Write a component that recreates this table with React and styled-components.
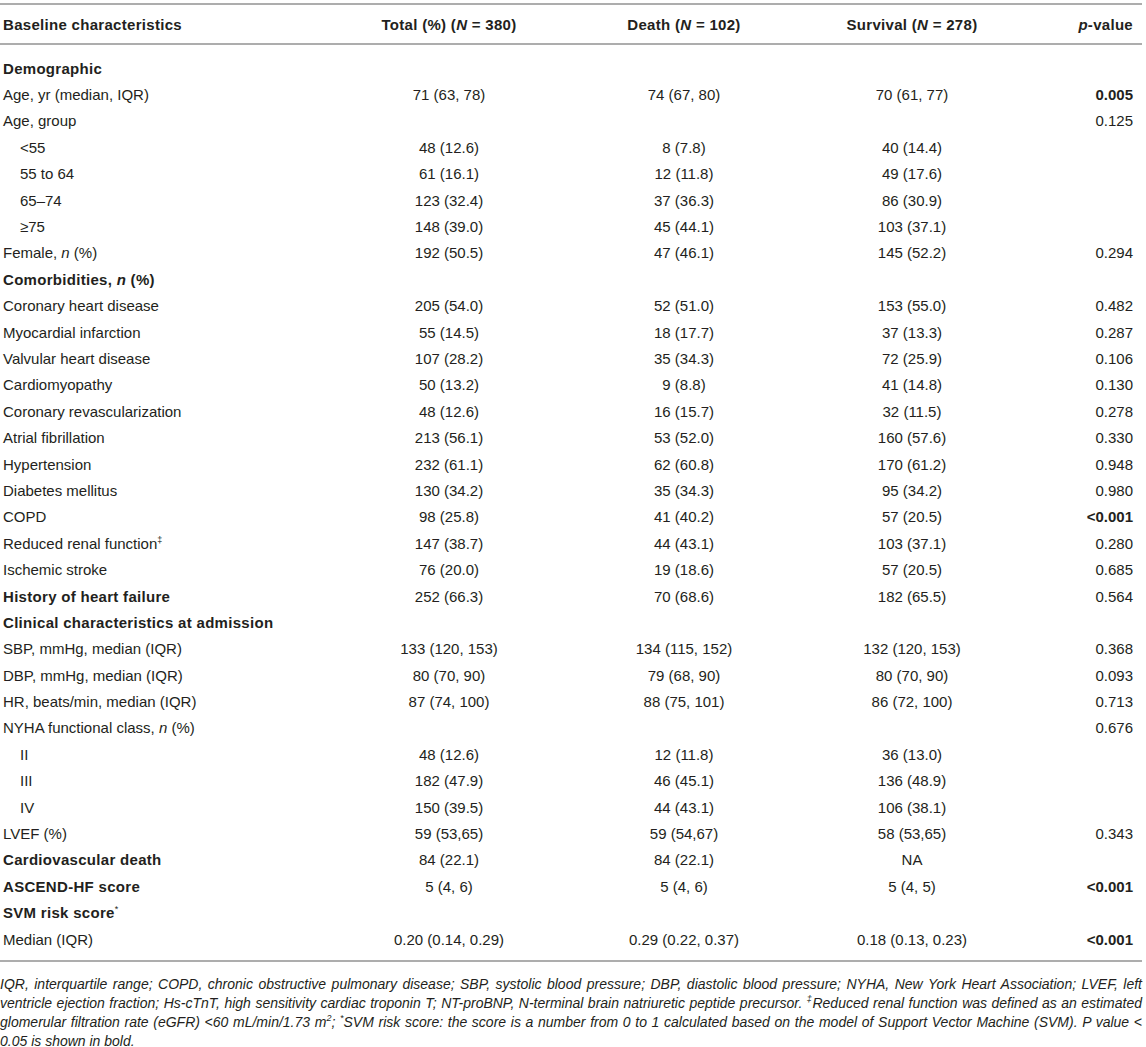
import React from "react";
import styled, { createGlobalStyle } from "styled-components";

const GlobalStyle = createGlobalStyle`
  body {
    margin: 0;
    background: #fff;
    font-family: "Liberation Sans", Arial, sans-serif;
    color: #231f20;
  }
`;

const COLS = "335px 228px 242px 214px 123px";

const Page = styled.div`
  width: 1142px;
  padding-top: 3px;
`;

const Head = styled.div`
  display: grid;
  grid-template-columns: ${COLS};
  align-items: center;
  height: 38px;
  border-top: 2px solid #adadad;
  border-bottom: 2px solid #adadad;
  font-size: 15px;
  font-weight: bold;
  letter-spacing: 0.3px;
`;

const Body = styled.div`
  padding: 10px 0 8px;
  border-bottom: 2px solid #adadad;
`;

const Row = styled.div`
  display: grid;
  grid-template-columns: ${COLS};
  align-items: center;
  height: 26.4px;
  font-size: 15px;
`;

const Label = styled.div`
  padding-left: ${(p) => (p.$indent ? "20px" : "3px")};
  font-weight: ${(p) => (p.$bold ? "bold" : "normal")};
  letter-spacing: ${(p) => (p.$bold ? "0.3px" : "0")};
  white-space: nowrap;
`;

const Cell = styled.div`
  text-align: center;
  white-space: nowrap;
`;

const PCell = styled.div`
  text-align: right;
  padding-right: 9px;
  font-weight: ${(p) => (p.$bold ? "bold" : "normal")};
  white-space: nowrap;
`;

const Sup = styled.sup`
  font-size: 9px;
  line-height: 0;
  font-weight: normal;
`;

const Note = styled.div`
  margin-top: 13px;
  font-size: 14px;
  line-height: 18.8px;
  font-style: italic;
`;

const NoteLine = styled.span`
  display: block;
  white-space: nowrap;
  text-align: justify;
  text-align-last: ${(p) => (p.$last ? "left" : "justify")};
`;

const rows = [
  { label: "Demographic", bold: true },
  { label: "Age, yr (median, IQR)", v: ["71 (63, 78)", "74 (67, 80)", "70 (61, 77)"], p: "0.005", pb: true },
  { label: "Age, group", v: ["", "", ""], p: "0.125" },
  { label: "<55", indent: true, v: ["48 (12.6)", "8 (7.8)", "40 (14.4)"] },
  { label: "55 to 64", indent: true, v: ["61 (16.1)", "12 (11.8)", "49 (17.6)"] },
  { label: "65–74", indent: true, v: ["123 (32.4)", "37 (36.3)", "86 (30.9)"] },
  { label: "≥75", indent: true, v: ["148 (39.0)", "45 (44.1)", "103 (37.1)"] },
  { label: <>Female, <i>n</i> (%)</>, v: ["192 (50.5)", "47 (46.1)", "145 (52.2)"], p: "0.294" },
  { label: <>Comorbidities, <i>n</i> (%)</>, bold: true },
  { label: "Coronary heart disease", v: ["205 (54.0)", "52 (51.0)", "153 (55.0)"], p: "0.482" },
  { label: "Myocardial infarction", v: ["55 (14.5)", "18 (17.7)", "37 (13.3)"], p: "0.287" },
  { label: "Valvular heart disease", v: ["107 (28.2)", "35 (34.3)", "72 (25.9)"], p: "0.106" },
  { label: "Cardiomyopathy", v: ["50 (13.2)", "9 (8.8)", "41 (14.8)"], p: "0.130" },
  { label: "Coronary revascularization", v: ["48 (12.6)", "16 (15.7)", "32 (11.5)"], p: "0.278" },
  { label: "Atrial fibrillation", v: ["213 (56.1)", "53 (52.0)", "160 (57.6)"], p: "0.330" },
  { label: "Hypertension", v: ["232 (61.1)", "62 (60.8)", "170 (61.2)"], p: "0.948" },
  { label: "Diabetes mellitus", v: ["130 (34.2)", "35 (34.3)", "95 (34.2)"], p: "0.980" },
  { label: "COPD", v: ["98 (25.8)", "41 (40.2)", "57 (20.5)"], p: "<0.001", pb: true },
  { label: <>Reduced renal function<Sup>‡</Sup></>, v: ["147 (38.7)", "44 (43.1)", "103 (37.1)"], p: "0.280" },
  { label: "Ischemic stroke", v: ["76 (20.0)", "19 (18.6)", "57 (20.5)"], p: "0.685" },
  { label: "History of heart failure", bold: true, v: ["252 (66.3)", "70 (68.6)", "182 (65.5)"], p: "0.564" },
  { label: "Clinical characteristics at admission", bold: true },
  { label: "SBP, mmHg, median (IQR)", v: ["133 (120, 153)", "134 (115, 152)", "132 (120, 153)"], p: "0.368" },
  { label: "DBP, mmHg, median (IQR)", v: ["80 (70, 90)", "79 (68, 90)", "80 (70, 90)"], p: "0.093" },
  { label: "HR, beats/min, median (IQR)", v: ["87 (74, 100)", "88 (75, 101)", "86 (72, 100)"], p: "0.713" },
  { label: <>NYHA functional class, <i>n</i> (%)</>, v: ["", "", ""], p: "0.676" },
  { label: "II", indent: true, v: ["48 (12.6)", "12 (11.8)", "36 (13.0)"] },
  { label: "III", indent: true, v: ["182 (47.9)", "46 (45.1)", "136 (48.9)"] },
  { label: "IV", indent: true, v: ["150 (39.5)", "44 (43.1)", "106 (38.1)"] },
  { label: "LVEF (%)", v: ["59 (53,65)", "59 (54,67)", "58 (53,65)"], p: "0.343" },
  { label: "Cardiovascular death", bold: true, v: ["84 (22.1)", "84 (22.1)", "NA"] },
  { label: "ASCEND-HF score", bold: true, v: ["5 (4, 6)", "5 (4, 6)", "5 (4, 5)"], p: "<0.001", pb: true },
  { label: <>SVM risk score<Sup>*</Sup></>, bold: true },
  { label: "Median (IQR)", v: ["0.20 (0.14, 0.29)", "0.29 (0.22, 0.37)", "0.18 (0.13, 0.23)"], p: "<0.001", pb: true },
];

export default function App() {
  return (
    <Page>
      <GlobalStyle />
      <Head>
        <Label $bold>Baseline characteristics</Label>
        <Cell>Total (%) (<i>N</i> = 380)</Cell>
        <Cell>Death (<i>N</i> = 102)</Cell>
        <Cell>Survival (<i>N</i> = 278)</Cell>
        <PCell $bold><i>p</i>-value</PCell>
      </Head>
      <Body>
        {rows.map((r, i) => (
          <Row key={i}>
            <Label $bold={r.bold} $indent={r.indent}>{r.label}</Label>
            {(r.v || ["", "", ""]).map((v, j) => (
              <Cell key={j}>{v}</Cell>
            ))}
            <PCell $bold={r.pb}>{r.p || ""}</PCell>
          </Row>
        ))}
      </Body>
      <Note>
        <NoteLine>
          IQR, interquartile range; COPD, chronic obstructive pulmonary disease; SBP, systolic blood
          pressure; DBP, diastolic blood pressure; NYHA, New York Heart Association; LVEF, left
        </NoteLine>
        <NoteLine>
          ventricle ejection fraction; Hs-cTnT, high sensitivity cardiac troponin T; NT-proBNP,
          N-terminal brain natriuretic peptide precursor. <Sup>‡</Sup>Reduced renal function was
          defined as an estimated
        </NoteLine>
        <NoteLine>
          glomerular filtration rate (eGFR) &lt;60 mL/min/1.73 m<Sup>2</Sup>; <Sup>*</Sup>SVM risk
          score: the score is a number from 0 to 1 calculated based on the model of Support Vector
          Machine (SVM). P value &lt;
        </NoteLine>
        <NoteLine $last>0.05 is shown in bold.</NoteLine>
      </Note>
    </Page>
  );
}
